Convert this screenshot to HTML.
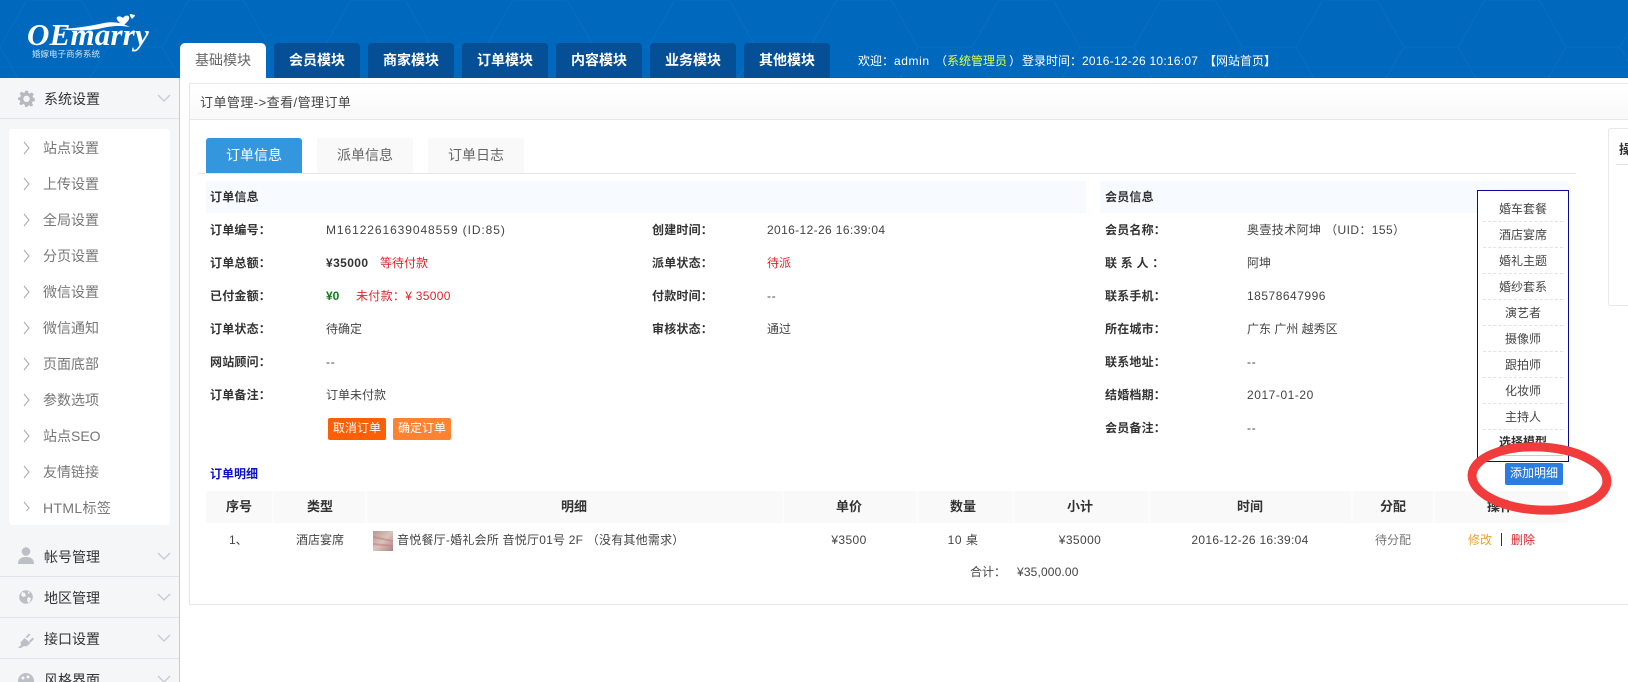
<!DOCTYPE html>
<html lang="zh"><head><meta charset="utf-8"><title>订单管理</title>
<style>
*{box-sizing:border-box;margin:0;padding:0}
html,body{width:1628px;height:682px;overflow:hidden;background:#fff}
body{position:relative;font-family:"Liberation Sans","Noto Sans CJK SC",sans-serif;font-size:12px;color:#444}
.a{position:absolute;white-space:nowrap}
.t{position:absolute;white-space:nowrap;line-height:20px;height:20px}
.c{transform:translateX(-50%)}
.hd{left:0;top:0;width:1628px;height:78px;background:#0069be}
.mt{top:43px;width:86px;height:35px;line-height:34px;text-align:center;font-size:14px;font-weight:700;color:#fff;background:#044f95;border-radius:4px 4px 0 0}
.side{left:0;top:78px;width:180px;height:604px;background:#f4f6f8;border-right:1px solid #c9c9c9}
.sh{font-size:14px;color:#333}
.si{font-size:14px;color:#777;left:43px}
.dv{left:0;width:179px;height:1px;background:#e1e3e6}
.lb{font-weight:700;color:#333;letter-spacing:.2px}
.v{font-size:12px;color:#444;letter-spacing:.75px}
.th{font-size:13px;font-weight:700;color:#333}
.dash{left:1483px;width:80px;height:0;border-top:1px dashed #e2e2e2}
.mi{left:1478px;width:90px;text-align:center;color:#444;font-size:12px;line-height:20px;height:20px}
.w{position:absolute;white-space:nowrap;top:51px;line-height:20px;height:20px;color:#fff;font-size:12px}
svg{position:absolute;display:block}
</style></head><body>

<div class="a hd"></div>
<svg style="left:0;top:0" width="1628" height="78"><defs><pattern id="h" width="162" height="94" patternUnits="userSpaceOnUse"><path d="M0 47L27 0M0 47L27 94M27 0H81M81 0L108 47L81 94M108 47H162M27 94H81" fill="none" stroke="#1a7bc9" stroke-width="1" opacity=".25"/></pattern></defs><rect width="1628" height="78" fill="url(#h)"/></svg>

<svg style="left:26px;top:14px" width="126" height="46" viewBox="0 0 126 46"><path d="M34 15C52 14 64 12 78 9C88 7 96 9 104 13C92 11 84 12 72 15C60 17 46 17 34 15Z" fill="#fff"/><path d="M92 7C88 2 94 1 97 4C99 0 106 1 102 7L97 12Z" fill="#fff"/><path d="M104 2C103 0 105-1 107 1C108 0 110 1 108 3L106 5Z" fill="#fff"/></svg>
<div class="a" style="left:27px;top:12px;font:italic 700 31px/46px 'Liberation Serif',serif;color:#fff;letter-spacing:.2px">OEmarry</div>
<div class="a" style="left:32px;top:46px;font-size:8.5px;line-height:16px;color:#cfe4f7;font-family:'Noto Sans CJK SC',sans-serif">婚嫁电子商务系统</div>

<div class="a mt" style="left:180px;background:#fff;color:#666;font-weight:400;border-radius:5px 5px 0 0">基础模块</div>
<div class="a mt" style="left:274px">会员模块</div>
<div class="a mt" style="left:368px">商家模块</div>
<div class="a mt" style="left:462px">订单模块</div>
<div class="a mt" style="left:556px">内容模块</div>
<div class="a mt" style="left:650px">业务模块</div>
<div class="a mt" style="left:744px">其他模块</div>

<div class="w" style="left:858px">欢迎：</div>
<div class="w" style="left:894px;letter-spacing:.6px">admin</div>
<div class="w" style="left:935px">（</div>
<div class="w" style="left:947px;color:#e4ff3c">系统管理员</div>
<div class="w" style="left:1009px">）</div>
<div class="w" style="left:1022px">登录时间：</div>
<div class="w" style="left:1082px;letter-spacing:.25px">2016-12-26 10:16:07</div>
<div class="w" style="left:1204px;letter-spacing:.4px;font-weight:700">【</div>
<div class="w" style="left:1216px">网站首页</div>
<div class="w" style="left:1264px;font-weight:700">】</div>

<!-- sidebar -->
<div class="a side"></div>
<svg style="left:18px;top:90px" width="17" height="17" viewBox="0 0 24 24"><path fill="#b6bac0" fill-rule="evenodd" d="M10 1h4l.7 3.2 2.1.9 2.8-1.8 2.8 2.8-1.8 2.8.9 2.1L23.700 11.700v4l-3.200.700-.900 2.100 1.800 2.800-2.800 2.200-2.800-1.800-2.100.9L13 24h-3l-.7-3.300-2.100-.9-2.800 1.800-2.800-2.200 1.800-2.800-.9-2.100L0 13.700v-3l3.200-.7.900-2.100L2.300 5.100 5.100 2.300l2.800 1.800 2.100-.9zM12 8a4.500 4.500 0 100 9 4.500 4.500 0 000-9z"/></svg>
<div class="t sh" style="left:44px;top:89px">系统设置</div>
<svg style="left:157px;top:94px" width="14" height="9" viewBox="0 0 14 9"><path d="M1 1l6 6 6-6" fill="none" stroke="#c6c9ce" stroke-width="1.300"/></svg>
<div class="a dv" style="top:118px"></div>
<div class="a" style="left:9px;top:129px;width:161px;height:396px;background:#fff;border-radius:3px"></div>

<div class="t si" style="top:138px">站点设置</div>
<div class="t si" style="top:174px">上传设置</div>
<div class="t si" style="top:210px">全局设置</div>
<div class="t si" style="top:246px">分页设置</div>
<div class="t si" style="top:282px">微信设置</div>
<div class="t si" style="top:318px">微信通知</div>
<div class="t si" style="top:354px">页面底部</div>
<div class="t si" style="top:390px">参数选项</div>
<div class="t si" style="top:426px">站点SEO</div>
<div class="t si" style="top:462px">友情链接</div>
<div class="t si" style="top:498px;letter-spacing:.35px">HTML标签</div>
<svg style="left:23px;top:141px" width="8" height="370" viewBox="0 0 8 370"><g fill="none" stroke="#a9a9a9" stroke-width="1"><path d="M1 1l5 6-5 6"/><path d="M1 37l5 6-5 6"/><path d="M1 73l5 6-5 6"/><path d="M1 109l5 6-5 6"/><path d="M1 145l5 6-5 6"/><path d="M1 181l5 6-5 6"/><path d="M1 217l5 6-5 6"/><path d="M1 253l5 6-5 6"/><path d="M1 289l5 6-5 6"/><path d="M1 325l5 6-5 6"/><path d="M1 361l5 6-5 6"/></g></svg>

<svg style="left:18px;top:547px" width="16" height="18" viewBox="0 0 16 18"><circle cx="8" cy="4.500" r="4.300" fill="#bcc0c6"/><path d="M0 17c0-5 3-7 8-7s8 2 8 7z" fill="#bcc0c6"/></svg>
<div class="t sh" style="left:44px;top:547px">帐号管理</div>
<svg style="left:157px;top:552px" width="14" height="9" viewBox="0 0 14 9"><path d="M1 1l6 6 6-6" fill="none" stroke="#c6c9ce" stroke-width="1.300"/></svg>
<div class="a dv" style="top:576px"></div>

<svg style="left:19px;top:590px" width="14" height="14" viewBox="0 0 14 14"><circle cx="7" cy="7" r="6.800" fill="#bcc0c6"/><path d="M3 2l3 1 1 3-3 1-2-2zM9 7l3 1-1 4-2 1-1-3zM9 1l2 2-2 1z" fill="#f4f6f8"/></svg>
<div class="t sh" style="left:44px;top:588px">地区管理</div>
<svg style="left:157px;top:593px" width="14" height="9" viewBox="0 0 14 9"><path d="M1 1l6 6 6-6" fill="none" stroke="#c6c9ce" stroke-width="1.300"/></svg>
<div class="a dv" style="top:617px"></div>

<svg style="left:18px;top:633px" width="16" height="15" viewBox="0 0 16 15"><path d="M0 15l3-3-.5-2.500L6.500 5l6 5-4 3.500-2.500-.5L3 15zM7.500 4L11 .5l1.500 1.200L9 5zM11 8l3.500-3.500L16 6l-3.500 3.500z" fill="#bcc0c6"/></svg>
<div class="t sh" style="left:44px;top:629px">接口设置</div>
<svg style="left:157px;top:634px" width="14" height="9" viewBox="0 0 14 9"><path d="M1 1l6 6 6-6" fill="none" stroke="#c6c9ce" stroke-width="1.300"/></svg>
<div class="a dv" style="top:658px"></div>

<svg style="left:18px;top:673px" width="16" height="16" viewBox="0 0 16 16"><circle cx="8" cy="8" r="8" fill="#bcc0c6"/><circle cx="5" cy="5" r="1.500" fill="#f4f6f8"/><circle cx="10" cy="4" r="1.500" fill="#f4f6f8"/></svg>
<div class="t sh" style="left:44px;top:670px">风格界面</div>
<svg style="left:157px;top:675px" width="14" height="7" viewBox="0 0 14 7"><path d="M1 1l6 6 6-6" fill="none" stroke="#c6c9ce" stroke-width="1.300"/></svg>

<!-- card -->
<div class="a" style="left:189px;top:83px;width:1460px;height:522px;border:1px solid #e6e6e6;background:#fff"></div>
<div class="a" style="left:190px;top:84px;width:1438px;height:36px;background:linear-gradient(#fff,#f9f9f9);border-bottom:1px solid #e8e8e8"></div>
<div class="t" style="left:200px;top:93px;font-size:13px;color:#444;letter-spacing:.45px">订单管理-&gt;查看/管理订单</div>

<!-- tabs -->
<div class="a" style="left:198px;top:173px;width:1378px;height:1px;background:#e6e6e6"></div>
<div class="a" style="left:206px;top:138px;width:96px;height:35px;background:#3497de;border-radius:3px 3px 0 0;color:#fff;font-size:14px;line-height:35px;text-align:center">订单信息</div>
<div class="a" style="left:317px;top:138px;width:96px;height:35px;background:#f9f9f9;color:#666;font-size:14px;line-height:35px;text-align:center">派单信息</div>
<div class="a" style="left:428px;top:138px;width:96px;height:35px;background:#f9f9f9;color:#666;font-size:14px;line-height:35px;text-align:center">订单日志</div>

<!-- section headers -->
<div class="a" style="left:206px;top:181px;width:880px;height:32px;background:#f7fbff"></div>
<div class="a" style="left:1100px;top:181px;width:468px;height:32px;background:#f7fbff"></div>
<div class="t lb" style="left:210px;top:187px">订单信息</div>
<div class="t lb" style="left:1105px;top:187px">会员信息</div>

<!-- left column -->
<div class="t lb" style="left:210px;top:220px">订单编号：</div><div class="t v" style="left:326px;top:220px;letter-spacing:.92px">M1612261639048559 (ID:85)</div>
<div class="t lb" style="left:210px;top:253px">订单总额：</div><div class="t" style="left:326px;top:253px;font-weight:700;color:#333;letter-spacing:.4px">¥35000</div><div class="t" style="left:380px;top:253px;color:#d9262c">等待付款</div>
<div class="t lb" style="left:210px;top:286px">已付金额：</div><div class="t" style="left:326px;top:286px;font-weight:700;color:#0a7d14">¥0</div><div class="t" style="left:356px;top:286px;color:#d9262c;letter-spacing:.3px">未付款：¥ 35000</div>
<div class="t lb" style="left:210px;top:319px">订单状态：</div><div class="t v" style="left:326px;top:319px;letter-spacing:0">待确定</div>
<div class="t lb" style="left:210px;top:352px">网站顾问：</div><div class="t v" style="left:326px;top:352px">--</div>
<div class="t lb" style="left:210px;top:385px">订单备注：</div><div class="t" style="left:326px;top:385px;color:#444">订单未付款</div>
<div class="a" style="left:328px;top:418px;width:58px;height:22px;background:#fd5f06;border-radius:2px;color:#fff;line-height:21px;text-align:center">取消订单</div>
<div class="a" style="left:393px;top:418px;width:58px;height:22px;background:#fd8333;border-radius:2px;color:#fff;line-height:21px;text-align:center">确定订单</div>

<!-- middle column -->
<div class="t lb" style="left:652px;top:220px">创建时间：</div><div class="t v" style="left:767px;top:220px;letter-spacing:.37px">2016-12-26 16:39:04</div>
<div class="t lb" style="left:652px;top:253px">派单状态：</div><div class="t" style="left:767px;top:253px;color:#d9262c">待派</div>
<div class="t lb" style="left:652px;top:286px">付款时间：</div><div class="t v" style="left:767px;top:286px">--</div>
<div class="t lb" style="left:652px;top:319px">审核状态：</div><div class="t" style="left:767px;top:319px">通过</div>

<!-- right column -->
<div class="t lb" style="left:1105px;top:220px">会员名称：</div><div class="t" style="left:1247px;top:220px;letter-spacing:.4px">奥壹技术阿坤 （UID：155）</div>
<div class="t lb" style="left:1105px;top:253px;word-spacing:0">联 系 人 ：</div><div class="t" style="left:1247px;top:253px">阿坤</div>
<div class="t lb" style="left:1105px;top:286px">联系手机：</div><div class="t v" style="left:1247px;top:286px;letter-spacing:.5px">18578647996</div>
<div class="t lb" style="left:1105px;top:319px">所在城市：</div><div class="t" style="left:1247px;top:319px">广东 广州 越秀区</div>
<div class="t lb" style="left:1105px;top:352px">联系地址：</div><div class="t v" style="left:1247px;top:352px">--</div>
<div class="t lb" style="left:1105px;top:385px">结婚档期：</div><div class="t v" style="left:1247px;top:385px;letter-spacing:.55px">2017-01-20</div>
<div class="t lb" style="left:1105px;top:418px">会员备注：</div><div class="t v" style="left:1247px;top:418px">--</div>

<!-- right side card -->
<div class="a" style="left:1608px;top:128px;width:40px;height:178px;border:1px solid #e8e8e8;border-radius:3px;background:#fff"></div>
<div class="t" style="left:1619px;top:140px;font-size:13px;font-weight:700;color:#333">操作</div>
<div class="a" style="left:1616px;top:164px;width:12px;height:1px;background:#e4e4e4"></div>

<!-- order details title -->
<div class="t" style="left:210px;top:464px;font-weight:700;color:#0b10c9">订单明细</div>

<!-- table -->
<div class="a" style="left:206px;top:491px;width:1362px;height:32px;background:#f9f9f9"></div>
<div class="a" style="left:272px;top:491px;width:2px;height:32px;background:#fcfcfc"></div>
<div class="a" style="left:365px;top:491px;width:2px;height:32px;background:#fcfcfc"></div>
<div class="a" style="left:782px;top:491px;width:2px;height:32px;background:#fcfcfc"></div>
<div class="a" style="left:916px;top:491px;width:2px;height:32px;background:#fcfcfc"></div>
<div class="a" style="left:1012px;top:491px;width:2px;height:32px;background:#fcfcfc"></div>
<div class="a" style="left:1148px;top:491px;width:2px;height:32px;background:#fcfcfc"></div>
<div class="a" style="left:1351px;top:491px;width:2px;height:32px;background:#fcfcfc"></div>
<div class="a" style="left:1433px;top:491px;width:2px;height:32px;background:#fcfcfc"></div>
<div class="t th c" style="left:239px;top:497px">序号</div>
<div class="t th c" style="left:320px;top:497px">类型</div>
<div class="t th c" style="left:574px;top:497px">明细</div>
<div class="t th c" style="left:849px;top:497px">单价</div>
<div class="t th c" style="left:963px;top:497px">数量</div>
<div class="t th c" style="left:1080px;top:497px">小计</div>
<div class="t th c" style="left:1250px;top:497px">时间</div>
<div class="t th c" style="left:1393px;top:497px">分配</div>
<div class="t th c" style="left:1500px;top:497px">操作</div>

<div class="t" style="left:229px;top:530px">1、</div>
<div class="t c" style="left:320px;top:530px">酒店宴席</div>
<svg style="left:373px;top:531px" width="20" height="20" viewBox="0 0 20 20"><defs><linearGradient id="g" x1="0" y1="0" x2="1" y2="1"><stop offset="0" stop-color="#b89692"/><stop offset=".5" stop-color="#d9c4bc"/><stop offset="1" stop-color="#a98580"/></linearGradient></defs><rect width="20" height="20" fill="url(#g)"/><path d="M0 6l20 4M0 13l20 2" stroke="#c97f86" stroke-width="2" opacity=".6"/></svg>
<div class="t" style="left:397px;top:530px;letter-spacing:.22px">音悦餐厅-婚礼会所 音悦厅01号 2F （没有其他需求）</div>
<div class="t v c" style="left:849px;top:530px;letter-spacing:.4px">¥3500</div>
<div class="t c" style="left:963px;top:530px;letter-spacing:.5px">10 桌</div>
<div class="t v c" style="left:1080px;top:530px;letter-spacing:.4px">¥35000</div>
<div class="t v c" style="left:1250px;top:530px;letter-spacing:.3px">2016-12-26 16:39:04</div>
<div class="t c" style="left:1393px;top:530px;color:#777">待分配</div>
<div class="t" style="left:1468px;top:530px;color:#f0a030">修改</div>
<div class="a" style="left:1501px;top:533px;width:1px;height:13px;background:#333"></div>
<div class="t" style="left:1511px;top:530px;color:#d9262c">删除</div>
<div class="t" style="left:970px;top:562px">合计：</div>
<div class="t v" style="left:1017px;top:562px;letter-spacing:.15px">¥35,000.00</div>

<!-- blue box menu -->
<div class="a" style="left:1477px;top:190px;width:92px;height:272px;border:1px solid #0a0a96;background:#fff"></div>
<div class="mi a" style="top:199px">婚车套餐</div><div class="a dash" style="top:221px"></div>
<div class="mi a" style="top:225px">酒店宴席</div><div class="a dash" style="top:247px"></div>
<div class="mi a" style="top:251px">婚礼主题</div><div class="a dash" style="top:273px"></div>
<div class="mi a" style="top:277px">婚纱套系</div><div class="a dash" style="top:299px"></div>
<div class="mi a" style="top:303px">演艺者</div><div class="a dash" style="top:325px"></div>
<div class="mi a" style="top:329px">摄像师</div><div class="a dash" style="top:351px"></div>
<div class="mi a" style="top:355px">跟拍师</div><div class="a dash" style="top:377px"></div>
<div class="mi a" style="top:381px">化妆师</div><div class="a dash" style="top:403px"></div>
<div class="mi a" style="top:407px">主持人</div><div class="a dash" style="top:429px"></div>
<div class="mi a" style="top:432px;font-weight:700;color:#333">选择模型</div>
<div class="a" style="left:1483px;top:455px;width:80px;height:1px;background:#ccc"></div>

<!-- add button -->
<div class="a" style="left:1505px;top:463px;width:58px;height:22px;background:#2b7de0;border-radius:2px;color:#fff;line-height:21px;text-align:center">添加明细</div>

<!-- red ellipse -->
<svg style="left:1460px;top:435px" width="160" height="86" viewBox="0 0 160 86"><ellipse cx="79.500" cy="43.500" rx="67.500" ry="31.500" transform="rotate(3 79.500 43.500)" fill="none" stroke="#f23c3c" stroke-width="9"/></svg>

</body></html>
